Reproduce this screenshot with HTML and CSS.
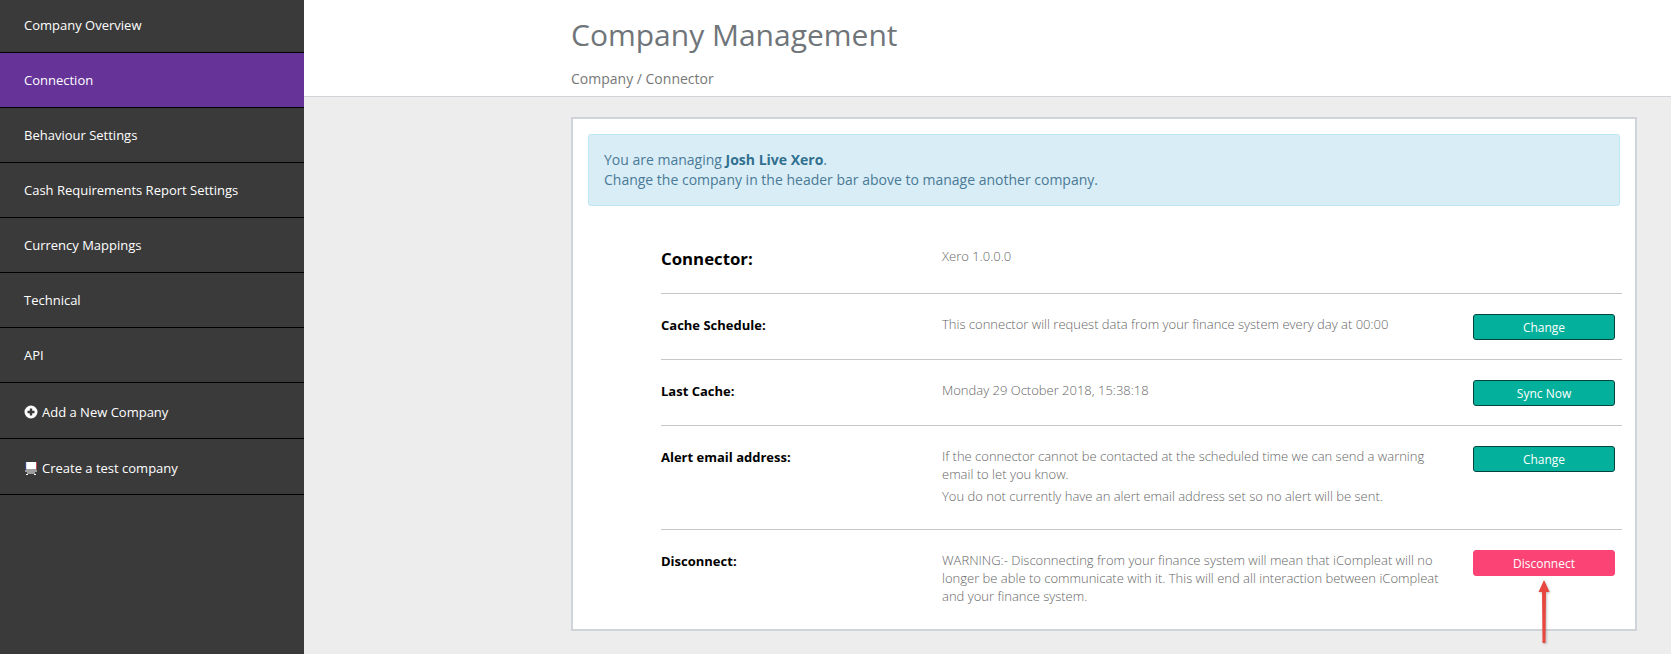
FILE: index.html
```html
<!DOCTYPE html>
<html lang="en">
<head>
<meta charset="utf-8">
<title>Company Management</title>
<link rel="stylesheet" href="styles.css">
</head>
<body>
<nav class="sidebar">
  <a class="nav-item first">Company Overview</a>
  <a class="nav-item active">Connection</a>
  <a class="nav-item">Behaviour Settings</a>
  <a class="nav-item">Cash Requirements Report Settings</a>
  <a class="nav-item">Currency Mappings</a>
  <a class="nav-item">Technical</a>
  <a class="nav-item">API</a>
  <a class="nav-item tall">
    <svg class="nav-icon" viewBox="0 0 14 14"><path fill="#fff" fill-rule="evenodd" d="M7 .5a6.500 6.500 0 1 0 0 13 6.500 6.500 0 0 0 0-13ZM5.800 3.500h2.400v2.300h2.300v2.400H8.200v2.300H5.800V8.200H3.500V5.800h2.300Z"/></svg>
    Add a New Company
  </a>
  <a class="nav-item tall">
    <svg class="nav-icon" viewBox="0 0 14 14"><path fill="#fff" d="M2 1h10.500v7.500H2Z"/><path fill="#35c" d="M1.500 1h.7v7.500h-.7Z"/><path fill="#c33" d="M12 1h.8v7.500H12Z"/><path fill="#fff" d="M1 9.500h12v1H1ZM3 11.500h8v1H3ZM2 13h2v1H2ZM10 13h2v1h-2Z"/></svg>
    Create a test company
  </a>
</nav>
<div class="main">
  <header class="page-header">
    <h1 class="title">Company Management</h1>
    <div class="crumbs">Company / Connector</div>
  </header>
  <div class="content">
    <section class="panel">
      <div class="alert">You are managing <b>Josh Live Xero</b>.<br>Change the company in the header bar above to manage another company.</div>
      <div class="rows">
        <div class="row first">
          <div class="label big">Connector:</div>
          <div class="value small"><p>Xero 1.0.0.0</p></div>
        </div>
        <div class="row">
          <div class="label">Cache Schedule:</div>
          <div class="value"><p>This connector will request data from your finance system every day at 00:00</p></div>
          <button class="btn">Change</button>
        </div>
        <div class="row">
          <div class="label">Last Cache:</div>
          <div class="value"><p>Monday 29 October 2018, 15:38:18</p></div>
          <button class="btn">Sync Now</button>
        </div>
        <div class="row tall">
          <div class="label">Alert email address:</div>
          <div class="value"><p>If the connector cannot be contacted at the scheduled time we can send a warning email to let you know.</p><p>You do not currently have an alert email address set so no alert will be sent.</p></div>
          <button class="btn">Change</button>
        </div>
        <div class="row">
          <div class="label">Disconnect:</div>
          <div class="value"><p>WARNING:- Disconnecting from your finance system will mean that iCompleat will no longer be able to communicate with it. This will end all interaction between iCompleat and your finance system.</p></div>
          <button class="btn danger">Disconnect</button>
        </div>
      </div>
    </section>
  </div>
</div>
<svg class="arrow" viewBox="0 0 16 64"><path fill="#e8473f" d="M8 0L13.500 12H10L9.500 63H6.500L6 12H2.500Z"/></svg>
</body>
</html>
```
FILE: styles.css
```css
* { box-sizing: border-box; }
html, body { margin: 0; height: 100%; }
body {
  display: flex;
  height: 654px;
  overflow: hidden;
  background: #ededed;
  font-family: "Open Sans", sans-serif;
  position: relative;
}
.sidebar {
  width: 304px;
  flex: none;
  background: #3a3a3a;
}
.nav-item {
  display: flex;
  align-items: center;
  height: 55px;
  padding: 0 24px;
  border-bottom: 1px solid #000;
  color: #fff;
  font-size: 13px;
}
.nav-item.first { height: 53px; padding-bottom: 3px; }
.nav-item.active { background: #663399; }
.nav-item.tall { height: 56px; padding-top: 2px; }
.nav-icon { width: 14px; height: 14px; margin-right: 4px; }
.main { flex: 1; min-width: 0; }
.page-header {
  height: 97px;
  background: #fff;
  border-bottom: 1px solid #d0d4d8;
  padding: 14px 0 0 267px;
}
.title {
  margin: 0;
  font-size: 30px;
  font-weight: 400;
  line-height: 41px;
  color: #70757a;
}
.crumbs {
  margin-top: 14px;
  font-size: 14px;
  line-height: 19px;
  color: #777;
}
.content { padding: 20px 0 0 267px; }
.panel {
  width: 1066px;
  height: 514px;
  background: #fff;
  border: 2px solid #d0d4d8;
  padding: 15px;
}
.alert {
  height: 72px;
  padding: 15px;
  background: #d9edf7;
  border: 1px solid #bce8f1;
  border-radius: 3px;
  color: #4a7a96;
  font-size: 14px;
  line-height: 20px;
}
.alert b { font-weight: 700; color: #31708f; }
.rows { margin: 0 -2px 0 73px; }
.row {
  display: grid;
  grid-template-columns: 281px 531px 142px;
  align-items: start;
  height: 66px;
  padding: 20px 7px 0 0;
  border-top: 1px solid #c8c8c8;
}
.row.first {
  height: 87px;
  padding-top: 0;
  border-top: 0;
}
.row.tall { height: 104px; }
.label {
  margin-top: 2px;
  font-size: 13px;
  font-weight: 700;
  line-height: 18px;
  color: #000;
}
.label.big { margin-top: 42px; font-size: 16.800px; line-height: 22px; }
.value {
  margin-top: 1px;
  padding-right: 31px;
  font-size: 13px;
  font-weight: 300;
  line-height: 18px;
  color: #666;
}
.value.small { margin-top: 41px; }
.value p { margin: 0 0 4px; }
.btn {
  height: 26px;
  padding: 0;
  border: 1px solid #04443d;
  border-radius: 3px;
  background: #02b09b;
  color: #fff;
  font: 400 12px "Open Sans", sans-serif;
}
.btn.danger { background: #fb4475; border-color: #fb4475; }
.arrow {
  position: absolute;
  left: 1536px;
  top: 580px;
  width: 16px;
  height: 64px;
  filter: drop-shadow(1px 1px 1px rgba(0,0,0,.25));
}
```
